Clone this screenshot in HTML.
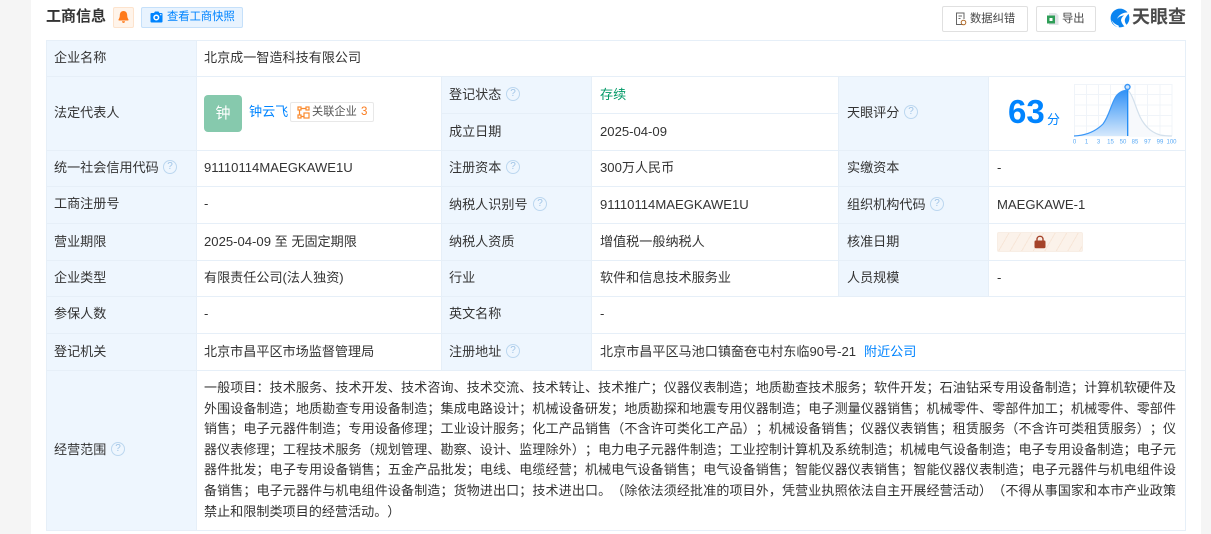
<!DOCTYPE html>
<html lang="zh-CN"><head><meta charset="utf-8"><title>工商信息</title>
<style>
html,body{margin:0;padding:0}
body{width:1211px;height:534px;overflow:hidden;position:relative;background:#f5f5f5;font-family:"Liberation Sans","Noto Sans CJK SC",sans-serif;font-size:13.1px;color:#333;text-spacing-trim:space-all}
div,span.a,svg.a{position:absolute}
#p{left:31px;top:0;width:1170px;height:534px;background:#fff}
.bg{background:#eef6fe}
.h{height:1px;background:#e6eff8}
.v{width:1px;background:#e6eff8}
.t{height:20px;line-height:20px;white-space:nowrap}
.l{width:972px;left:204px;height:20px;line-height:20px;white-space:nowrap;text-align:justify;text-align-last:justify;font-size:13px}
.q{width:12px;height:12px;border:1.5px solid #bcd7ef;border-radius:50%;color:#a0c4e6;font-size:10px;line-height:12px;text-align:center;font-family:"Liberation Sans",sans-serif}
.btn{border:1px solid #e0e0e0;border-radius:2px;background:#fff;box-sizing:border-box}
</style></head><body>
<div id="p"></div>

<div class="t" style="left:46px;top:7px;font-size:15px;font-weight:bold;color:#333">工商信息</div>
<div style="left:113px;top:7px;width:21px;height:21px;box-sizing:border-box;background:#fff4ea;border:1px solid #fde3cd;border-radius:2px"></div>
<svg class="a" style="left:118px;top:10px" width="11" height="14" viewBox="0 0 11 14"><path d="M5.500 1C3 1 1.800 3 1.800 5.400c0 2-.7 3.200-1.300 4.200-.2.4 0 .9.500.9h9c.5 0 .7-.5.500-.9-.6-1-1.300-2.200-1.300-4.200C9.200 3 8 1 5.500 1zM4 11.200h3c0 1-.7 1.700-1.500 1.700S4 12.200 4 11.200z" fill="#ff7a1a"/></svg>
<div style="left:141px;top:7px;width:102px;height:21px;box-sizing:border-box;background:#e8f3fe;border:1px solid #c5e0fa;border-radius:2px"></div>
<svg class="a" style="left:150px;top:11px" width="13" height="12" viewBox="0 0 13 12"><path d="M1.500 2H4L5 .5h3.500L9.500 2h2c.6 0 1 .4 1 1v7.500c0 .6-.4 1-1 1h-10c-.6 0-1-.4-1-1V3c0-.6.4-1 1-1z" fill="#0084ff"/><circle cx="6.300" cy="6.500" r="2.300" fill="none" stroke="#fff" stroke-width="1.500"/><circle cx="10.800" cy="3.700" r=".7" fill="#fff"/></svg>
<div class="t" style="left:167px;top:7px;font-size:11.300px;color:#0084ff">查看工商快照</div>

<div class="btn" style="left:942px;top:6px;width:86px;height:26px"></div>
<svg class="a" style="left:955px;top:12px" width="12" height="14" viewBox="0 0 12 14"><path d="M8 12.500H1.500V1h7.500v6" fill="none" stroke="#666" stroke-width="1"/><path d="M3.500 4h3.500M3.500 6.500h2" stroke="#666" stroke-width="1"/><circle cx="8.500" cy="10.500" r="2.300" fill="none" stroke="#b06a28" stroke-width="1"/></svg>
<div class="t" style="left:970px;top:9px;font-size:11.300px;color:#444">数据纠错</div>
<div class="btn" style="left:1036px;top:6px;width:60px;height:26px"></div>
<svg class="a" style="left:1046px;top:12px" width="13" height="14" viewBox="0 0 13 14"><path d="M3 1h7l2.500 2.500V13H3z" fill="#dfe3e6"/><rect x="1" y="3.500" width="8" height="8" fill="#2f9e57"/><rect x="3.500" y="6" width="3" height="3" fill="#fff"/></svg>
<div class="t" style="left:1062px;top:9px;font-size:11.300px;color:#444">导出</div>

<svg class="a" style="left:1110px;top:8px" width="20" height="20" viewBox="0 0 20 20"><circle cx="10" cy="10" r="9.400" fill="#0a84f0"/><path d="M19.500 4.500C14.500 4 9 6 7 11c2-2.500 4.500-3.500 7-3.500-1.800 1.300-3 3-3 5 .7 2.500 2.200 5 4 6.300 .8-.4 1.300-.9 1.800-1.500-1.800-2.300-2.500-4.800-1.600-6.800 .9-2 2.400-3.700 4.300-6z" fill="#fff"/><path d="M1.500 12c1.500 2.500 4 4.500 7 5.500l.5 2C5 18.500 2.500 15.500 1.500 12z" fill="#fff"/></svg>
<div class="t" style="left:1132px;top:7px;font-size:18px;font-weight:bold;color:#4a4a4a">天眼查</div>

<!-- label backgrounds -->
<div class="bg" style="left:46px;top:40px;width:150px;height:491px"></div>
<div class="bg" style="left:441px;top:76px;width:150px;height:294px"></div>
<div class="bg" style="left:838px;top:76px;width:150px;height:220px"></div>

<!-- horizontal lines -->
<div class="h" style="left:46px;top:40px;width:1140px"></div>
<div class="h" style="left:46px;top:76px;width:1140px"></div>
<div class="h" style="left:441px;top:113px;width:397px"></div>
<div class="h" style="left:46px;top:150px;width:1140px"></div>
<div class="h" style="left:46px;top:186px;width:1140px"></div>
<div class="h" style="left:46px;top:223px;width:1140px"></div>
<div class="h" style="left:46px;top:260px;width:1140px"></div>
<div class="h" style="left:46px;top:296px;width:1140px"></div>
<div class="h" style="left:46px;top:333px;width:1140px"></div>
<div class="h" style="left:46px;top:370px;width:1140px"></div>
<div class="h" style="left:46px;top:530px;width:1140px"></div>
<!-- vertical lines -->
<div class="v" style="left:46px;top:40px;height:491px"></div>
<div class="v" style="left:196px;top:40px;height:491px"></div>
<div class="v" style="left:1185px;top:40px;height:491px"></div>
<div class="v" style="left:441px;top:76px;height:294px"></div>
<div class="v" style="left:591px;top:76px;height:294px"></div>
<div class="v" style="left:838px;top:76px;height:220px"></div>
<div class="v" style="left:988px;top:76px;height:220px"></div>

<!-- column 1 -->
<div class="t" style="left:54px;top:48px">企业名称</div>
<div class="t" style="left:204px;top:48px">北京成一智造科技有限公司</div>
<div class="t" style="left:54px;top:103px">法定代表人</div>
<div style="left:204px;top:95px;width:38px;height:37px;background:#86c9ad;border-radius:4px;color:#fff;font-size:15px;line-height:37px;text-align:center">钟</div>
<div class="t" style="left:249px;top:102px;color:#0084ff">钟云飞</div>
<div style="left:290px;top:102px;width:84px;height:20px;box-sizing:border-box;border:1px solid #e8e8e8;border-radius:2px;background:#fff"></div>
<svg class="a" style="left:297px;top:106px" width="13" height="13" viewBox="0 0 13 13"><g fill="none" stroke="#fa8a2e" stroke-width="1.200"><rect x="1" y="1" width="3" height="3"/><rect x="9" y="1" width="3" height="3"/><rect x="1" y="9" width="3" height="3"/><rect x="7" y="7" width="5" height="5"/><path d="M2.500 4v5M4 2.500h5M4 10.500h3"/></g></svg>
<div class="t" style="left:312px;top:102px;font-size:11.200px;color:#555">关联企业</div>
<div class="t" style="left:361px;top:102px;font-size:11.500px;color:#fa7a1c">3</div>
<div class="t" style="left:54px;top:158px">统一社会信用代码</div>
<div class="q" style="left:163px;top:160px">?</div>
<div class="t" style="left:204px;top:158px">91110114MAEGKAWE1U</div>
<div class="t" style="left:54px;top:194px">工商注册号</div>
<div class="t" style="left:204px;top:194px">-</div>
<div class="t" style="left:54px;top:232px">营业期限</div>
<div class="t" style="left:204px;top:232px">2025-04-09 至 无固定期限</div>
<div class="t" style="left:54px;top:268px">企业类型</div>
<div class="t" style="left:204px;top:268px">有限责任公司(法人独资)</div>
<div class="t" style="left:54px;top:304px">参保人数</div>
<div class="t" style="left:204px;top:304px">-</div>
<div class="t" style="left:54px;top:342px">登记机关</div>
<div class="t" style="left:204px;top:342px">北京市昌平区市场监督管理局</div>

<!-- column 2 -->
<div class="t" style="left:449px;top:85px">登记状态</div>
<div class="q" style="left:506px;top:87px">?</div>
<div class="t" style="left:600px;top:85px;color:#009966">存续</div>
<div class="t" style="left:449px;top:122px">成立日期</div>
<div class="t" style="left:600px;top:122px">2025-04-09</div>
<div class="t" style="left:449px;top:158px">注册资本</div>
<div class="q" style="left:506px;top:160px">?</div>
<div class="t" style="left:600px;top:158px">300万人民币</div>
<div class="t" style="left:449px;top:195px">纳税人识别号</div>
<div class="q" style="left:533px;top:197px">?</div>
<div class="t" style="left:600px;top:195px">91110114MAEGKAWE1U</div>
<div class="t" style="left:449px;top:232px">纳税人资质</div>
<div class="t" style="left:600px;top:232px">增值税一般纳税人</div>
<div class="t" style="left:449px;top:268px">行业</div>
<div class="t" style="left:600px;top:268px">软件和信息技术服务业</div>
<div class="t" style="left:449px;top:304px">英文名称</div>
<div class="t" style="left:600px;top:304px">-</div>
<div class="t" style="left:449px;top:342px">注册地址</div>
<div class="q" style="left:506px;top:344px">?</div>
<div class="t" style="left:600px;top:342px">北京市昌平区马池口镇奤夿屯村东临90号-21</div>
<div class="t" style="left:864px;top:342px;color:#0084ff">附近公司</div>

<!-- column 3 -->
<div class="t" style="left:847px;top:103px">天眼评分</div>
<div class="q" style="left:904px;top:105px">?</div>
<div class="t" style="left:847px;top:158px">实缴资本</div>
<div class="t" style="left:997px;top:158px">-</div>
<div class="t" style="left:847px;top:195px">组织机构代码</div>
<div class="q" style="left:930px;top:197px">?</div>
<div class="t" style="left:997px;top:195px">MAEGKAWE-1</div>
<div class="t" style="left:847px;top:232px">核准日期</div>
<div style="left:997px;top:232px;width:86px;height:20px;box-sizing:border-box;border:1px solid #f8eee5;border-radius:2px;background:repeating-linear-gradient(120deg,#fbf2ea 0 9px,#f7e6d8 9px 10px)"></div>
<svg class="a" style="left:1033px;top:235px" width="14" height="14" viewBox="0 0 14 14"><path d="M4 6V4.200C4 2.500 5.300 1.300 7 1.300s3 1.200 3 2.900V6" fill="none" stroke="#a5432a" stroke-width="1.400"/><rect x="1.500" y="5.500" width="11" height="7.700" rx="1.200" fill="#a5432a"/></svg>
<div class="t" style="left:847px;top:268px">人员规模</div>
<div class="t" style="left:997px;top:268px">-</div>

<!-- score -->
<div class="t" style="left:1008px;top:92px;height:40px;line-height:40px;font-size:33px;font-weight:bold;color:#0084ff">63</div>
<div class="t" style="left:1047px;top:110px;font-size:13px;color:#0084ff">分</div>
<svg class="a" style="left:1070px;top:80px" width="110" height="68" viewBox="1070 80 110 68">
<defs><linearGradient id="g" x1="0" y1="0" x2="0" y2="1"><stop offset="0" stop-color="#2f90f6"/><stop offset="1" stop-color="#d6e9fc"/></linearGradient></defs>
<g stroke="#f0f4f9" stroke-width="1">
<path d="M1074.500 84v52M1086.500 84v52M1098.500 84v52M1110.500 84v52M1123 84v52M1135 84v52M1147.500 84v52M1160 84v52M1172 84v52"/>
<path d="M1074 84.500h98M1074 94.500h98M1074 105h98M1074 115.500h98M1074 126h98M1074 136h98"/></g>
<path d="M1127.700 90C1133 95 1135 106 1140 116.700C1144 125 1150 132 1160 135C1165 136 1169 136 1172 136H1127.700Z" fill="#f7f9fc"/>
<path d="M1074 136C1085 135.500 1095 132 1103 124C1109 116 1111 105 1115 98C1118 92.500 1122 90.500 1127.700 90V136Z" fill="url(#g)"/>
<path d="M1074 136C1085 135.500 1095 132 1103 124C1109 116 1111 105 1115 98C1118 92.500 1122 90.500 1127.700 90" fill="none" stroke="#3a97f7" stroke-width="1.200"/>
<path d="M1127.700 90C1133 95 1135 106 1140 116.700C1144 125 1150 132 1160 135C1165 136 1169 136 1172 136" fill="none" stroke="#d3e0ec" stroke-width="1.200"/>
<path d="M1127.700 90V136" stroke="#1d8bf5" stroke-width="1.300"/>
<circle cx="1127.500" cy="87" r="2.500" fill="#cfe5fc" stroke="#3a97f7" stroke-width="1.400"/>
<g font-size="6" fill="#5aaaf5" text-anchor="middle" font-family="Liberation Sans, sans-serif">
<text x="1074.500" y="143.500">0</text><text x="1086.500" y="143.500">1</text><text x="1098.500" y="143.500">3</text><text x="1110.500" y="143.500">15</text><text x="1123" y="143.500">50</text><text x="1135" y="143.500">85</text><text x="1147.500" y="143.500">97</text><text x="1160" y="143.500">99</text><text x="1171.500" y="143.500">100</text></g>
</svg>

<!-- scope -->
<div class="t" style="left:54px;top:440px">经营范围</div>
<div class="q" style="left:111px;top:442px">?</div>
<div class="l" style="top:377.500px">一般项目：技术服务、技术开发、技术咨询、技术交流、技术转让、技术推广；仪器仪表制造；地质勘查技术服务；软件开发；石油钻采专用设备制造；计算机软硬件及</div>
<div class="l" style="top:398.700px">外围设备制造；地质勘查专用设备制造；集成电路设计；机械设备研发；地质勘探和地震专用仪器制造；电子测量仪器销售；机械零件、零部件加工；机械零件、零部件</div>
<div class="l" style="top:419px">销售；电子元器件制造；专用设备修理；工业设计服务；化工产品销售（不含许可类化工产品）；机械设备销售；仪器仪表销售；租赁服务（不含许可类租赁服务）；仪</div>
<div class="l" style="top:440px">器仪表修理；工程技术服务（规划管理、勘察、设计、监理除外）；电力电子元器件制造；工业控制计算机及系统制造；机械电气设备制造；电子专用设备制造；电子元</div>
<div class="l" style="top:460px">器件批发；电子专用设备销售；五金产品批发；电线、电缆经营；机械电气设备销售；电气设备销售；智能仪器仪表销售；智能仪器仪表制造；电子元器件与机电组件设</div>
<div class="l" style="top:480.700px">备销售；电子元器件与机电组件设备制造；货物进出口；技术进出口。（除依法须经批准的项目外，凭营业执照依法自主开展经营活动）（不得从事国家和本市产业政策</div>
<div class="t" style="left:204px;top:501.500px">禁止和限制类项目的经营活动。）</div>
</body></html>
